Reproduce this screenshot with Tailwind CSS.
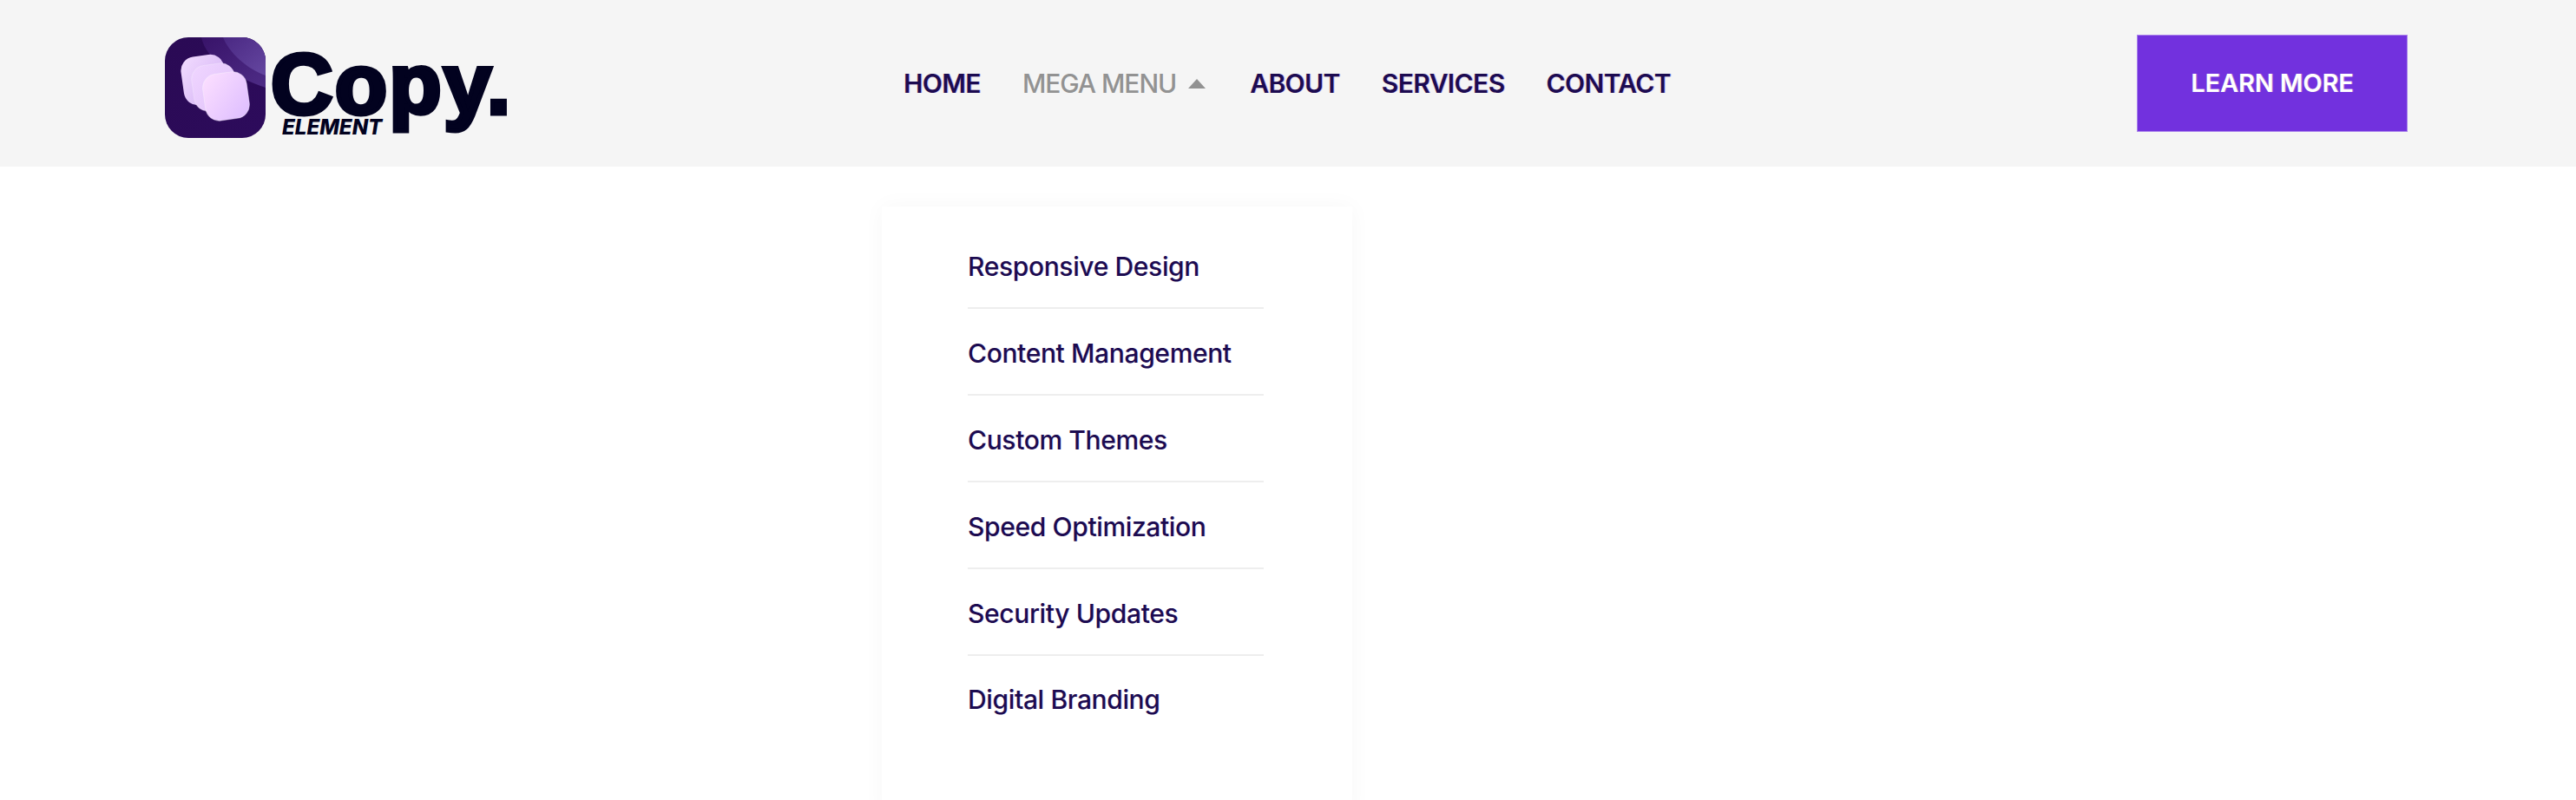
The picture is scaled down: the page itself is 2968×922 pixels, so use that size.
<!DOCTYPE html>
<html lang="en">
<head>
<meta charset="utf-8">
<title>Copy Element</title>
<script src="https://cdn.jsdelivr.net/npm/@tailwindcss/browser@4"></script>
</head>
<body class="relative h-[922px] overflow-hidden bg-white font-['Inter',sans-serif]">
<header class="flex h-[192px] items-center bg-[#f5f5f5] pl-[190px] pr-[194px]">
  <a href="#" class="mt-[10px] flex items-center">
    <svg class="h-[116px] w-[116px] shrink-0" viewBox="0 0 116 116" aria-hidden="true">
      <defs>
        <clipPath id="ic"><rect width="116" height="116" rx="27"/></clipPath>
        <linearGradient id="bg" x1="0" y1="0" x2="1" y2="1"><stop offset="0" stop-color="#2a0a54"/><stop offset="1" stop-color="#2d0b5c"/></linearGradient>
        <linearGradient id="a1" x1="0" y1="0" x2="1" y2="1"><stop offset="0" stop-color="#381369"/><stop offset="1" stop-color="#4e2c86"/></linearGradient>
        <linearGradient id="a2" x1="0" y1="0" x2="1" y2="1"><stop offset="0" stop-color="#4a2883"/><stop offset="1" stop-color="#6547a0"/></linearGradient>
        <linearGradient id="sq1" x1="0" y1="0" x2="1" y2="1"><stop offset="0" stop-color="#f3ddff"/><stop offset="1" stop-color="#cfacf3"/></linearGradient>
        <linearGradient id="sq2" x1="0" y1="0" x2="1" y2="1"><stop offset="0" stop-color="#f0d6ff"/><stop offset="1" stop-color="#dfc0fa"/></linearGradient>
        <linearGradient id="sq3" x1="0" y1="0" x2="1" y2="1"><stop offset="0" stop-color="#fde0ff"/><stop offset="1" stop-color="#dcbcff"/></linearGradient>
      </defs>
      <g clip-path="url(#ic)">
        <rect width="116" height="116" fill="url(#bg)"/>
        <path d="M42 0C48 28 82 46 116 58V0Z" fill="url(#a1)"/>
        <path d="M67 0C74 18 94 36 116 44V0Z" fill="url(#a2)"/>
      </g>
      <rect x="20" y="21" width="50" height="56" rx="16" transform="rotate(-8 45 49)" fill="url(#sq1)"/>
      <rect x="32" y="31" width="50" height="53" rx="16" transform="rotate(-8 57 57)" fill="url(#sq2)" stroke="#fff" stroke-opacity=".25"/>
      <rect x="45" y="41" width="51" height="54" rx="16" transform="rotate(-8 70 68)" fill="url(#sq3)" stroke="#fff" stroke-opacity=".35"/>
    </svg>
    <span class="relative ml-[6px] block h-[116px] w-[276px] text-[#02021f]">
      <span class="block -translate-y-[4px] font-['Liberation_Sans',sans-serif] text-[99px] font-bold leading-[116px] tracking-[0.022em] [-webkit-text-stroke:5px_#02021f]">Copy.</span>
      <span class="absolute left-[13px] top-[92px] text-[24px] font-extrabold italic leading-[24px]">ELEMENT</span>
    </span>
  </a>
  <nav class="ml-[453px] flex items-center gap-[48px] text-[30px] font-semibold leading-none tracking-[-0.02em] text-[#1c0b50] [text-shadow:1px_0_0_rgba(124,58,237,0.4),-1px_0_0_rgba(255,170,60,0.15)]">
    <a href="#">HOME</a>
    <a href="#" class="flex items-center gap-[14px] font-medium tracking-[-0.035em] text-[#929292] [text-shadow:none]">MEGA MENU
      <svg class="h-[11px] w-[20px]" viewBox="0 0 20 11" aria-hidden="true"><path d="M10 0L20 11H0Z" fill="#929292"/></svg>
    </a>
    <a href="#" class="ml-[3px]">ABOUT</a>
    <a href="#">SERVICES</a>
    <a href="#">CONTACT</a>
  </nav>
  <a href="#" class="ml-auto flex h-[112px] w-[312px] items-center justify-center border border-white/40 bg-[#7231de] text-[29px] font-semibold tracking-[-0.005em] text-white [text-shadow:1px_0_0_rgba(255,230,160,0.4)]">LEARN MORE</a>
</header>
<div class="absolute left-[1016px] top-[238px] h-[700px] w-[542px] bg-white px-[99px] pt-[18px] shadow-[0_0_24px_rgba(0,0,0,0.035)]">
  <ul class="w-[341px] text-[30px] font-medium leading-none tracking-[-0.012em] text-[#1c0b50] [text-shadow:1px_0_0_rgba(124,58,237,0.15)]">
    <li class="flex h-[100px] items-center border-b-2 border-[#eeeeee] pt-[3px]">Responsive Design</li>
    <li class="flex h-[100px] items-center border-b-2 border-[#eeeeee] pt-[3px]">Content Management</li>
    <li class="flex h-[100px] items-center border-b-2 border-[#eeeeee] pt-[3px]">Custom Themes</li>
    <li class="flex h-[100px] items-center border-b-2 border-[#eeeeee] pt-[3px]">Speed Optimization</li>
    <li class="flex h-[100px] items-center border-b-2 border-[#eeeeee] pt-[3px]">Security Updates</li>
    <li class="flex h-[100px] items-center">Digital Branding</li>
  </ul>
</div>
</body>
</html>
